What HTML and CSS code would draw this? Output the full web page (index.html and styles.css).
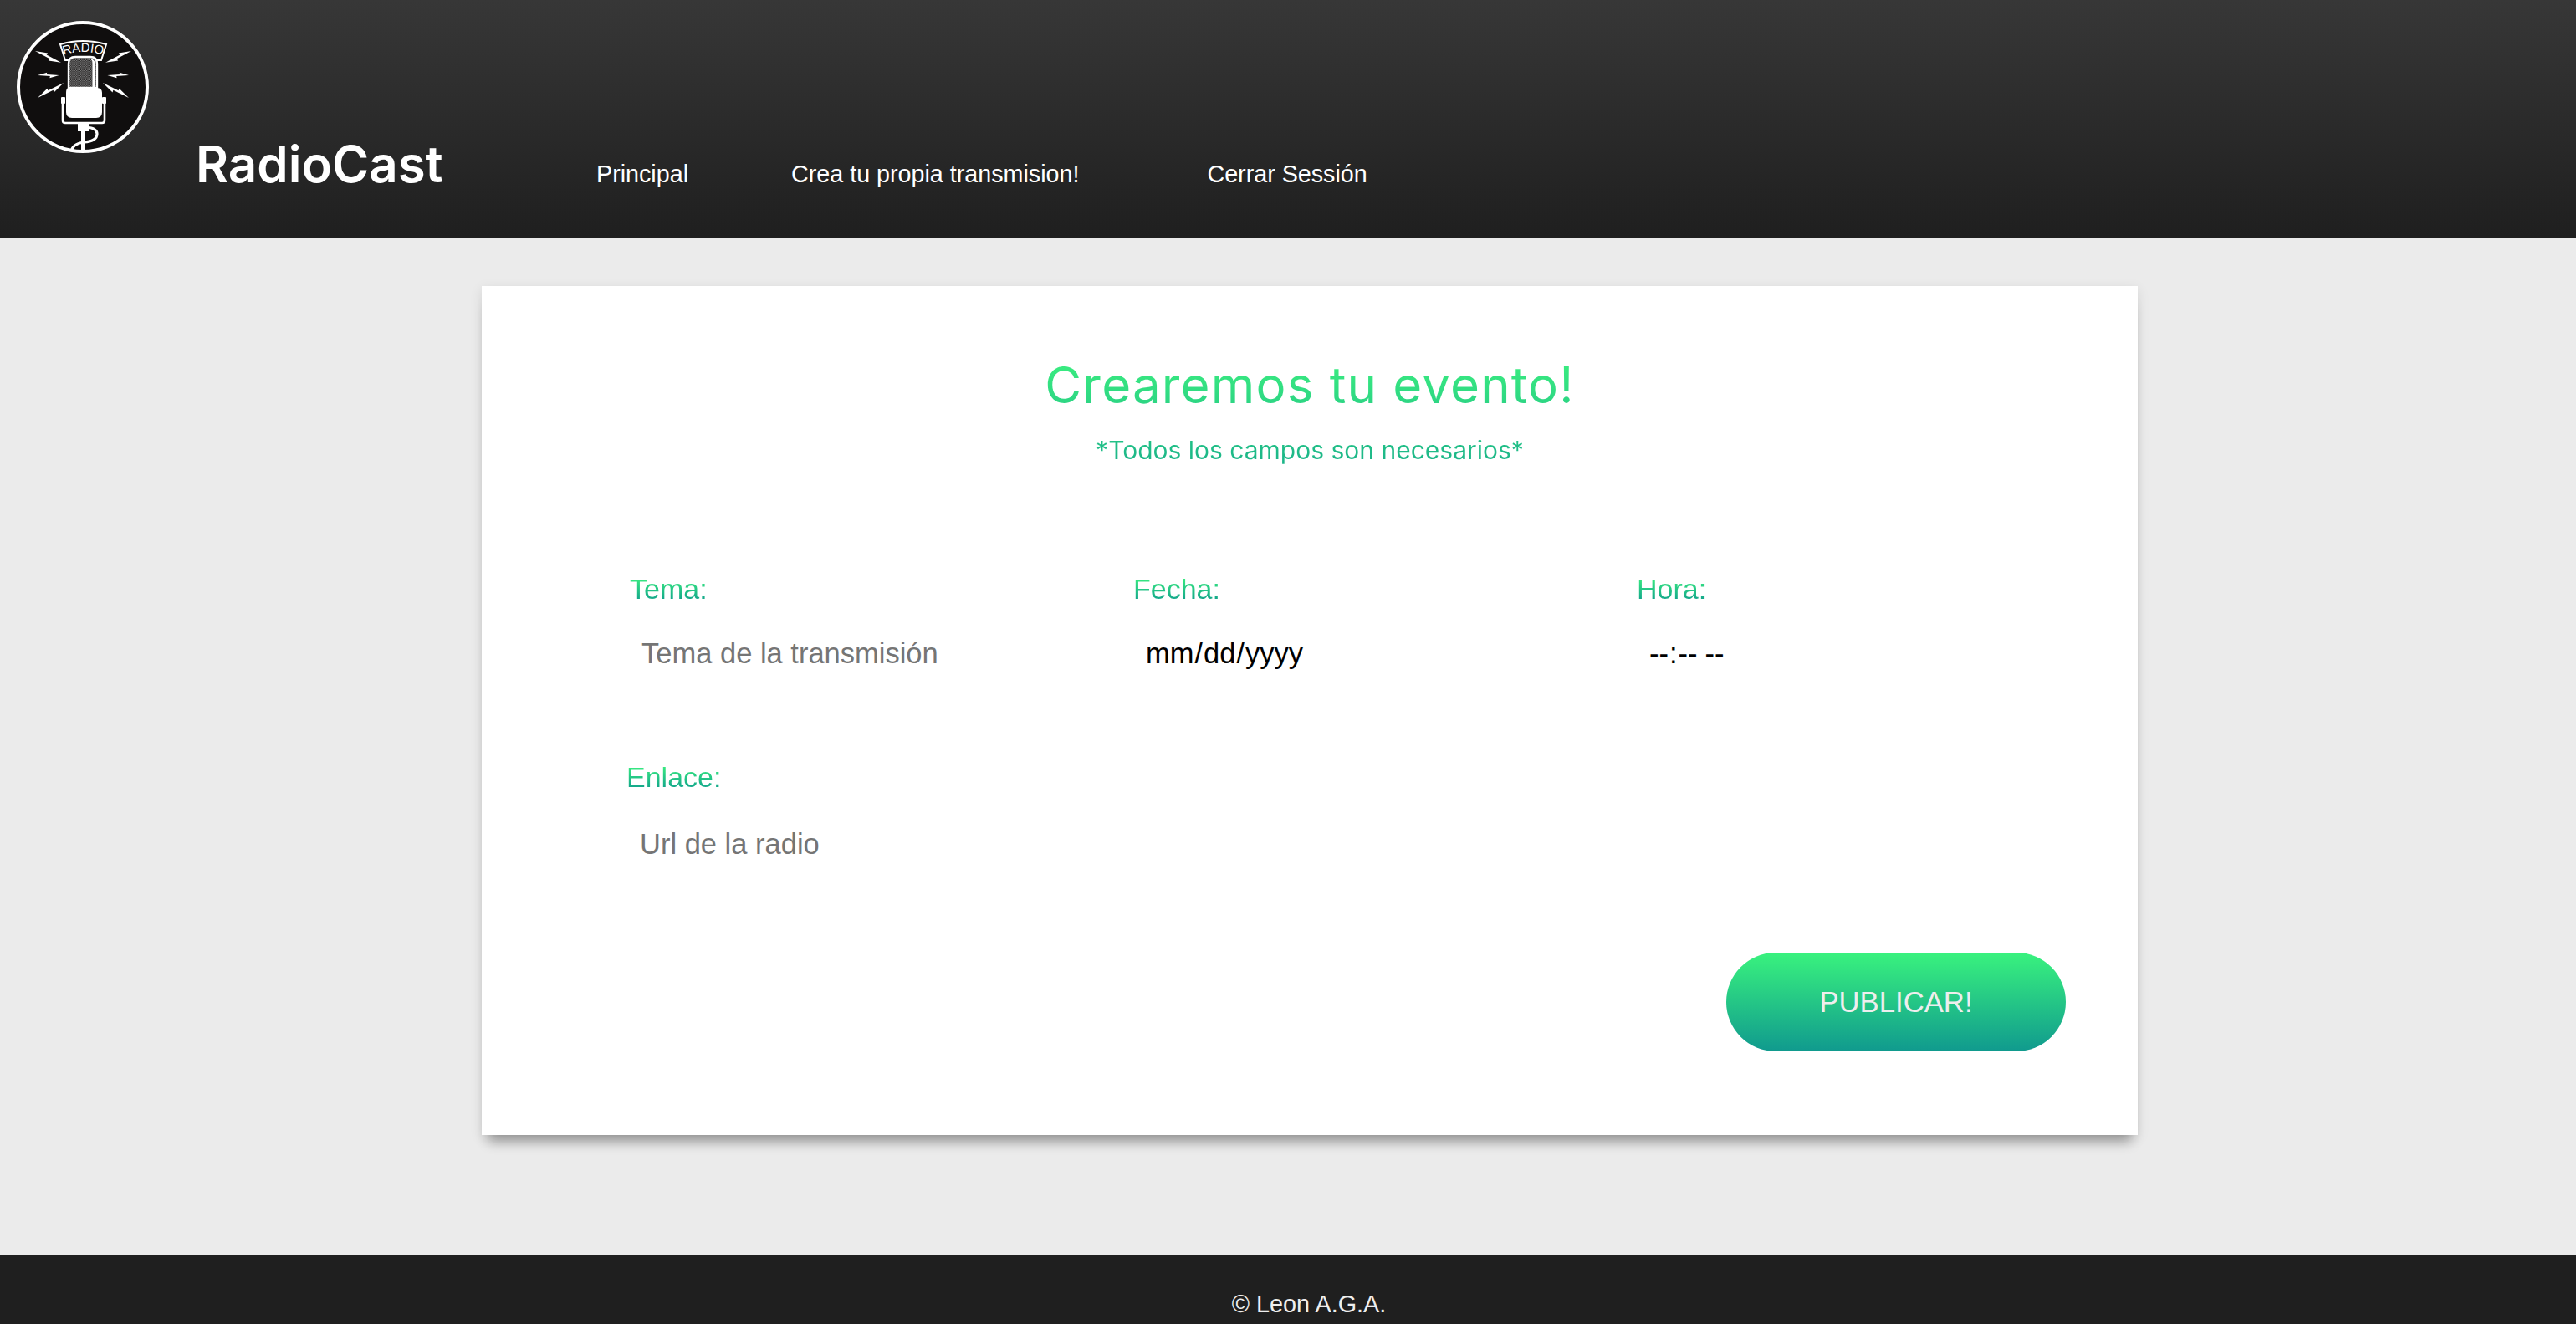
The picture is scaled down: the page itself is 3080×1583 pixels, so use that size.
FILE: index.html
```html
<!DOCTYPE html>
<html lang="es">
<head>
    <meta charset="UTF-8">
    <meta name="viewport" content="width=device-width, initial-scale=1.0">
    <title>RadioCast</title>
    <link rel="stylesheet" href="styles.css">
</head>
<body>

    <header class="topbar">
        <svg class="logo" viewBox="20 25 158 158" aria-label="Radio logo">
            <defs>
                <pattern id="micGrille" width="2.4" height="2.4" patternUnits="userSpaceOnUse">
                    <rect width="2.4" height="2.4" fill="#161414"/>
                    <rect width="1.2" height="1.2" fill="#8a8a8a"/>
                    <rect x="1.2" y="1.2" width="1.2" height="1.2" fill="#8a8a8a"/>
                </pattern>
                <clipPath id="logoClip"><circle cx="99" cy="104" r="78"/></clipPath>
                <path id="bolt" d="M0 0 L14 -4 L13.5 -1.4 L32 0 L18 4 L18.5 1.4 Z" fill="#fff"/>
                <g id="bolts">
                    <use href="#bolt" transform="translate(42 61) rotate(24) scale(1.06 1)"/>
                    <use href="#bolt" transform="translate(45 90) scale(0.8 0.8)"/>
                    <use href="#bolt" transform="translate(45 117) rotate(-30) scale(1.12 1)"/>
                </g>
            </defs>
            <circle cx="99" cy="104" r="77" fill="#100e0e" stroke="#fff" stroke-width="4"/>
            <use href="#bolts"/>
            <use href="#bolts" transform="translate(199 0) scale(-1 1)"/>
            <!-- banner -->
            <path d="M72 53 Q99 45 127 53 L121 72 L78 72 Z" fill="#100e0e" stroke="#fff" stroke-width="2"/>
            <path id="bannerArc" d="M75 66 Q99 58 124 66" fill="none"/>
            <text class="logo-text"><textPath href="#bannerArc" startOffset="50%" text-anchor="middle">RADIO</textPath></text>
            <!-- mic head -->
            <path d="M82 105 V76 Q82 68 90 68 H108 Q116 68 116 76 V105 Z" fill="url(#micGrille)" stroke="#fff" stroke-width="2.4"/>
            <path d="M108 70 Q114 71 114 78 V105 H110.5 V76 Q110.5 72 108 70 Z" fill="#fff"/>
            <!-- mic body and cradle -->
            <path d="M82 105 H116 Q122 105 122 111 V134 Q122 141 115 141 H86 Q79 141 79 134 V111 Q79 105 82 105 Z" fill="#fff"/>
            <path d="M75 120 V144 Q75 147 78 147 H122 Q125 147 125 144 V120" fill="none" stroke="#fff" stroke-width="2.6"/>
            <rect x="73" y="116" width="5" height="8" rx="1" fill="#fff"/>
            <rect x="122" y="116" width="5" height="8" rx="1" fill="#fff"/>
            <!-- stand and cable -->
            <g clip-path="url(#logoClip)">
                <rect x="93" y="148" width="13" height="9" fill="#fff"/>
                <rect x="97" y="157" width="5" height="26" fill="#fff"/>
                <path d="M103 152 Q116 153 116 160 Q116 169 100 170 Q86 172 85 182" fill="none" stroke="#fff" stroke-width="3.2"/>
            </g>
        </svg>

        <div class="topbar-row">
            <a class="brand" href="#">RadioCast</a>
            <nav class="main-nav">
                <a href="#">Principal</a>
                <a class="nav-wide" href="#">Crea tu propia transmision!</a>
                <a href="#">Cerrar Sessión</a>
            </nav>
        </div>
    </header>

    <main class="page">
        <form class="event-card">
            <div class="card-title">
                <h1>Crearemos tu evento!</h1>
                <p>*Todos los campos son necesarios*</p>
            </div>

            <div class="form-row">
                <div class="field">
                    <label for="tema">Tema:</label>
                    <input type="text" id="tema" placeholder="Tema de la transmisión">
                </div>
                <div class="field">
                    <label for="fecha">Fecha:</label>
                    <input type="date" id="fecha">
                </div>
                <div class="field">
                    <label for="hora">Hora:</label>
                    <input type="time" id="hora">
                </div>
            </div>

            <div class="form-row form-row-link">
                <div class="field">
                    <label for="enlace">Enlace:</label>
                    <input type="text" id="enlace" placeholder="Url de la radio">
                </div>
            </div>

            <div class="form-actions">
                <button type="submit">PUBLICAR!</button>
            </div>
        </form>
    </main>

    <footer class="site-footer">© Leon A.G.A.</footer>

</body>
</html>
```

FILE: styles.css
```css
* {
    box-sizing: border-box;
}

body {
    margin: 0;
    height: 1583px;
    overflow: hidden;
    display: flex;
    flex-direction: column;
    font-family: "Liberation Sans", Arial, sans-serif;
    background-color: #ebebeb;
}

.topbar {
    height: 284px;
    padding: 25px 0 0 20px;
    display: flex;
    align-items: flex-start;
    background: linear-gradient(#373737, #1f1f1f);
}

.logo {
    width: 158px;
    height: 158px;
    flex: none;
}

.logo-text {
    font-family: "Liberation Sans", Arial, sans-serif;
    font-size: 15px;
    fill: #fff;
}

.topbar-row {
    display: flex;
    align-items: baseline;
    margin-left: 56px;
    margin-top: 136px;
}

.brand {
    width: 299px;
    font-family: Inter, "Noto Sans", sans-serif;
    font-size: 60px;
    font-weight: 600;
    line-height: 70px;
    color: #fff;
    text-decoration: none;
}

.main-nav {
    display: flex;
    margin-left: 180px;
}

.main-nav a {
    margin-right: 123px;
    font-size: 28.7px;
    color: #fff;
    text-decoration: none;
}

.main-nav a.nav-wide {
    margin-right: 153px;
}

.page {
    flex: 1;
    padding-top: 58px;
}

.event-card {
    width: 1980px;
    height: 1015px;
    margin-left: 576px;
    padding: 80px 86px 0 177px;
    background-color: #fff;
    box-shadow: 0 4px 14px rgba(0, 0, 0, 0.1), 0 16px 14px -8px rgba(0, 0, 0, 0.32);
}

.card-title {
    margin-left: -177px;
    margin-right: -86px;
    padding-bottom: 40px;
    text-align: center;
    font-family: Inter, "Noto Sans", sans-serif;
    background: linear-gradient(#3df27f, #10a08c);
    -webkit-background-clip: text;
    background-clip: text;
    color: transparent;
}

.card-title h1 {
    margin: 0;
    font-size: 60px;
    font-weight: 400;
    line-height: 76px;
    letter-spacing: 1.2px;
}

.card-title p {
    margin: 20px 0 0;
    font-size: 30px;
    line-height: 40px;
}

.form-row {
    display: flex;
    margin-top: 87px;
}

.form-row-link {
    margin-left: -2px;
    margin-top: 99px;
}

.form-row-link label {
    margin-left: -2px;
}

.field {
    flex: none;
    width: 602px;
}

.field label {
    display: block;
    font-size: 34px;
    line-height: 38px;
    background: linear-gradient(#3df27f 10%, #10a08c 90%);
    -webkit-background-clip: text;
    background-clip: text;
    color: transparent;
}

.field input {
    display: block;
    width: 480px;
    height: 60px;
    margin-top: 28px;
    padding: 0 14px;
    border: none;
    outline: none;
    background: transparent;
    font-family: "Liberation Sans", Arial, sans-serif;
    font-size: 34.5px;
    color: #000;
}

.form-row-link .field input {
    margin-top: 31px;
}

.field input::-webkit-calendar-picker-indicator {
    display: none;
}

.form-actions {
    display: flex;
    justify-content: flex-end;
    margin-top: 100px;
}

.form-actions button {
    width: 406px;
    height: 118px;
    border: none;
    border-radius: 59px;
    background: linear-gradient(#39f27e, #109a8e);
    color: #eee;
    font-family: "Liberation Sans", Arial, sans-serif;
    font-size: 34.7px;
    cursor: pointer;
}

.site-footer {
    height: 82px;
    padding: 42px 0 0 50px;
    text-align: center;
    background-color: #1f1f1f;
    color: #eee;
    font-size: 28.8px;
    line-height: 32px;
}
```
